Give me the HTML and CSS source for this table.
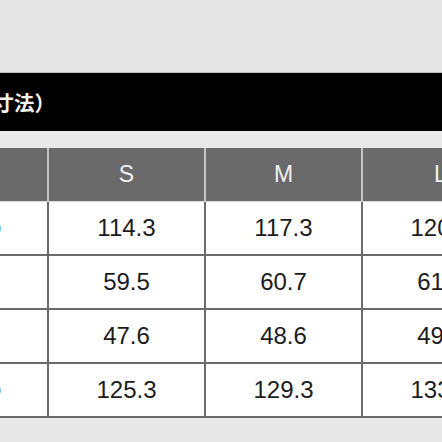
FILE: index.html
```html
<!DOCTYPE html>
<html lang="ja">
<head>
<meta charset="utf-8">
<link rel="stylesheet" href="styles.css">
</head>
<body>
<div class="page">
  <div class="top"></div>
  <div class="titlebar"><span class="title">サイズ（仕上がり寸法）</span></div>
  <div class="spacer"></div>
  <div class="chart">
    <div class="head">
      <div class="hcell"></div>
      <div class="hcell">S</div>
      <div class="hcell">M</div>
      <div class="hcell">L</div>
    </div>
    <div class="body">
      <div class="lcell">チェスト周り</div><div class="cell">114.3</div><div class="cell">117.3</div><div class="cell">120.3</div>
      <div class="lcell">着丈</div><div class="cell">59.5</div><div class="cell">60.7</div><div class="cell">61.9</div>
      <div class="lcell">肩幅</div><div class="cell">47.6</div><div class="cell">48.6</div><div class="cell">49.6</div>
      <div class="lcell">ウエスト周り</div><div class="cell">125.3</div><div class="cell">129.3</div><div class="cell">133.3</div>
    </div>
  </div>
</div>
</body>
</html>
```
FILE: styles.css
```css
html, body {
  margin: 0;
  padding: 0;
  background: #e8e8e8;
  overflow: hidden;
}
.page {
  width: 442px;
  height: 442px;
  overflow: hidden;
  background: #e8e8e8;
}
.top {
  height: 72px;
  background: #e6e6e6;
  border-bottom: 1px solid #bdbdbd;
}
.titlebar {
  height: 58px;
  background: #000;
  display: flex;
  align-items: center;
  overflow: hidden;
  white-space: nowrap;
}
.title {
  margin-left: -170px;
  font-family: "Noto Sans CJK JP", sans-serif;
  font-weight: 700;
  font-size: 20.5px;
  color: #f2f2f2;
}
.spacer {
  height: 17px;
  background: #e9e9e9;
}
.chart {
  margin-left: -153px;
  width: 680px;
}
.head {
  display: grid;
  grid-template-columns: 200px 155px 155px 155px;
  column-gap: 2px;
  background: #c4c4c4;
  border-bottom: 1px solid #d8d8d8;
}
.hcell {
  height: 53px;
  background: #6a6a6a;
  color: #f0f0f0;
  font-family: "Liberation Sans", Arial, sans-serif;
  font-size: 23px;
  display: flex;
  align-items: center;
  justify-content: center;
}
.body {
  display: grid;
  grid-template-columns: 200px 155px 155px 155px;
  gap: 2px;
  background: #6a6a6a;
  padding-bottom: 2px;
}
.cell, .lcell {
  height: 52px;
  background: #fff;
  display: flex;
  align-items: center;
  justify-content: center;
  color: #1c1c1c;
  font-family: "Liberation Sans", Arial, sans-serif;
  font-size: 24px;
}
.lcell {
  font-family: "Noto Sans CJK JP", sans-serif;
  font-size: 18px;
  padding-left: 6px;
  box-sizing: border-box;
}
```
